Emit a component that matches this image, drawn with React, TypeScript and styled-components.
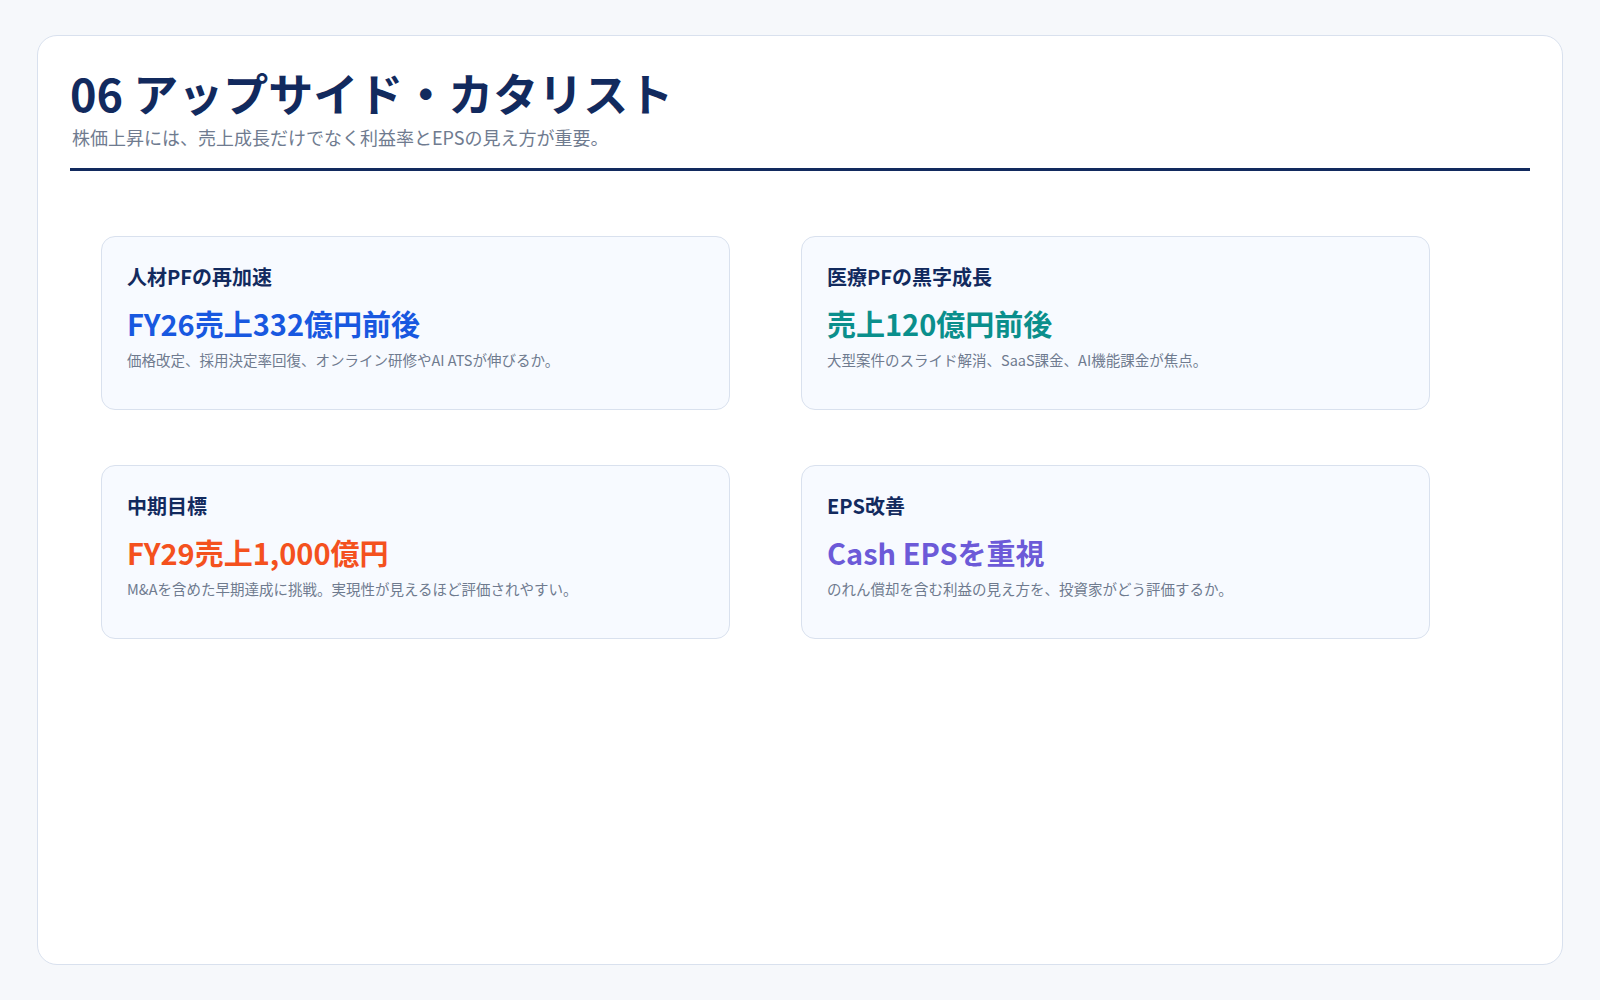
import React from "react";
import styled, { createGlobalStyle } from "styled-components";

const Global = createGlobalStyle`
  html, body { margin: 0; padding: 0; background: #f6f8fb; }
  body { font-family: "Noto Sans CJK JP", "Noto Sans", sans-serif; }
`;

const Page = styled.div`
  padding: 35px 37px;
  box-sizing: border-box;
  height: 1000px;
`;

const Panel = styled.div`
  background: #fff;
  border: 1.5px solid #d9e1ee;
  border-radius: 20px;
  height: 930px;
  box-sizing: border-box;
  padding: 26px 32px 0 32px;
`;

const Title = styled.h1`
  margin: 0;
  font-size: 45px;
  font-weight: 700;
  color: #122a5e;
  line-height: 62px;
`;

const Subtitle = styled.p`
  margin: 0 0 0 2px;
  font-size: 18px;
  color: #6f7b8f;
  line-height: 26px;
`;

const Rule = styled.hr`
  border: none;
  height: 3px;
  background: #122a5e;
  margin: 18px 0 0 0;
`;

const Grid = styled.div`
  display: grid;
  grid-template-columns: 629px 629px;
  column-gap: 71px;
  row-gap: 55px;
  margin: 65px 0 0 31px;
`;

const Card = styled.div`
  background: #f7faff;
  border: 1.5px solid #d9e1ee;
  border-radius: 14px;
  height: 174px;
  box-sizing: border-box;
  padding: 24px 25px;
`;

const CardTitle = styled.div`
  font-size: 20px;
  font-weight: 700;
  color: #122a5e;
  line-height: 32px;
`;

const Value = styled.div<{ $c: string }>`
  font-size: 29px;
  font-weight: 700;
  color: ${(p) => p.$c};
  line-height: 40px;
  margin-top: 10px;
`;

const Desc = styled.div`
  font-size: 14.5px;
  color: #6f7b8f;
  line-height: 22px;
  margin-top: 6px;
`;

const items = [
  { t: "人材PFの再加速", v: "FY26売上332億円前後", c: "#1858e0", d: "価格改定、採用決定率回復、オンライン研修やAI ATSが伸びるか。" },
  { t: "医療PFの黒字成長", v: "売上120億円前後", c: "#0a8f8c", d: "大型案件のスライド解消、SaaS課金、AI機能課金が焦点。" },
  { t: "中期目標", v: "FY29売上1,000億円", c: "#f4511e", d: "M&Aを含めた早期達成に挑戦。実現性が見えるほど評価されやすい。" },
  { t: "EPS改善", v: "Cash EPSを重視", c: "#6c5ad8", d: "のれん償却を含む利益の見え方を、投資家がどう評価するか。" },
];

export default function App() {
  return (
    <Page>
      <Global />
      <Panel>
        <Title>06 アップサイド・カタリスト</Title>
        <Subtitle>株価上昇には、売上成長だけでなく利益率とEPSの見え方が重要。</Subtitle>
        <Rule />
        <Grid>
          {items.map((it) => (
            <Card key={it.t}>
              <CardTitle>{it.t}</CardTitle>
              <Value $c={it.c}>{it.v}</Value>
              <Desc>{it.d}</Desc>
            </Card>
          ))}
        </Grid>
      </Panel>
    </Page>
  );
}
